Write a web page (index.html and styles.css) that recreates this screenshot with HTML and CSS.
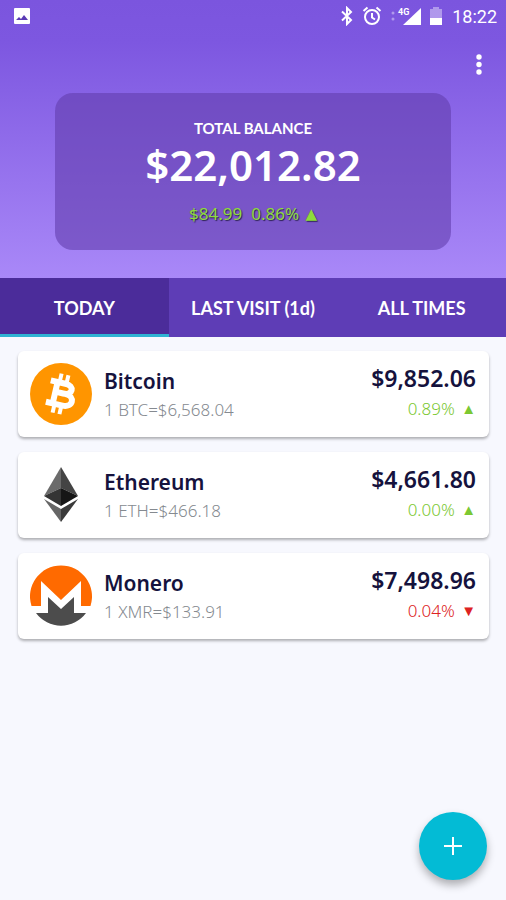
FILE: index.html
```html
<!DOCTYPE html>
<html lang="en">
<head>
  <meta charset="UTF-8">
  <meta name="viewport" content="width=device-width, initial-scale=1">
  <title>Portfolio</title>
  <link rel="stylesheet" href="styles.css">
</head>
<body>
  <header class="header">
    <div class="status-bar">
      <svg class="status-picture" width="18" height="18" viewBox="0 0 18 18">
        <rect x="1" y="1" width="16" height="16" rx="1" fill="#fff"/>
        <path d="M3 13l3-3 2 2 3-4 4 5z" fill="#5a3ab5"/>
      </svg>
      <div class="status-icons">
        <svg width="14" height="20" viewBox="0 0 14 20" fill="none" stroke="#fff" stroke-width="2">
          <path d="M2 5.500l9 8.500-4 4V2l4 4-9 8.500"/>
        </svg>
        <svg class="status-alarm" width="20" height="20" viewBox="0 0 20 20" fill="none" stroke="#fff" stroke-width="2">
          <circle cx="10" cy="11" r="7"/>
          <path d="M10 7v4.500l3 2M1.500 5L5.500 1.500M18.500 5l-4-3.500"/>
        </svg>
        <svg width="32" height="20" viewBox="0 0 32 20" fill="#fff">
          <circle cx="3" cy="7" r="1.500" opacity=".4"/>
          <circle cx="3" cy="13" r="1.500" opacity=".4"/>
          <path d="M31 2v17H13z"/>
          <text class="status-network" x="8" y="9">4G</text>
        </svg>
        <svg class="status-battery" width="12" height="20" viewBox="0 0 12 20" fill="#fff">
          <path d="M0 3h3V1h6v2h3v9H0z" opacity=".4"/>
          <path d="M0 12h12v7H0z"/>
        </svg>
        <span class="status-time">18:22</span>
      </div>
    </div>
    <div class="toolbar">
      <button class="menu-button" aria-label="More options">
        <svg width="6" height="22" viewBox="0 0 6 22" fill="#fff">
          <circle cx="3" cy="3" r="2.700"/>
          <circle cx="3" cy="10.500" r="2.700"/>
          <circle cx="3" cy="18" r="2.700"/>
        </svg>
      </button>
    </div>
    <section class="balance">
      <h1 class="balance-title">TOTAL BALANCE</h1>
      <div class="balance-amount">$22,012.82</div>
      <div class="balance-change">
        <span>$84.99</span>
        <span>0.86% <span class="arrow">▲</span></span>
      </div>
    </section>
  </header>

  <nav class="tabs">
    <button class="tab active">TODAY</button>
    <button class="tab">LAST VISIT (1d)</button>
    <button class="tab">ALL TIMES</button>
  </nav>

  <main class="coin-list">
    <article class="coin">
      <svg class="coin-logo" viewBox="0 0 62 62">
        <circle cx="31" cy="31" r="31" fill="#ff9500"/>
        <g transform="rotate(13 31 31)" fill="none" stroke="#fff">
          <path d="M27 11v8M34 11v8M27 43v8M34 43v8" stroke-width="4"/>
          <path d="M18 20h15c10 0 10 10 0 10H25h10c11 0 11 12 0 12H18M25 20v22" stroke-width="6"/>
        </g>
      </svg>
      <div class="coin-info">
        <h2 class="coin-name">Bitcoin</h2>
        <p class="coin-rate">1 BTC=$6,568.04</p>
      </div>
      <div class="coin-value">
        <div class="coin-amount">$9,852.06</div>
        <div class="coin-change up">0.89% <span class="arrow">▲</span></div>
      </div>
    </article>

    <article class="coin">
      <svg class="coin-logo" viewBox="0 0 62 62">
        <path d="M31 3L14 32l17-8z" fill="#6b6b6b"/>
        <path d="M31 3l17 29-17-8z" fill="#444"/>
        <path d="M14 32l17-8v18z" fill="#343434"/>
        <path d="M48 32l-17-8v18z" fill="#161616"/>
        <path d="M14 35l17 10v13z" fill="#666"/>
        <path d="M48 35L31 45v13z" fill="#3a3a3a"/>
      </svg>
      <div class="coin-info">
        <h2 class="coin-name">Ethereum</h2>
        <p class="coin-rate">1 ETH=$466.18</p>
      </div>
      <div class="coin-value">
        <div class="coin-amount">$4,661.80</div>
        <div class="coin-change up">0.00% <span class="arrow">▲</span></div>
      </div>
    </article>

    <article class="coin">
      <svg class="coin-logo" viewBox="0 0 62 62">
        <path d="M1.500 41A31 31 0 1 1 60.500 41H51V16L31 35 11 16v25z" fill="#ff6a00"/>
        <path d="M6 48h12V32l13 12 13-12v16h12a31 31 0 0 1-50 0z" fill="#4c4c4c"/>
      </svg>
      <div class="coin-info">
        <h2 class="coin-name">Monero</h2>
        <p class="coin-rate">1 XMR=$133.91</p>
      </div>
      <div class="coin-value">
        <div class="coin-amount">$7,498.96</div>
        <div class="coin-change down">0.04% <span class="arrow">▼</span></div>
      </div>
    </article>
  </main>

  <button class="add-button" aria-label="Add coin">
    <svg width="18" height="18" viewBox="0 0 18 18" stroke="#fff" stroke-width="2">
      <path d="M9 0v18M0 9h18"/>
    </svg>
  </button>
</body>
</html>
```
FILE: styles.css
```css
* {
  box-sizing: border-box;
}

body {
  margin: 0;
  min-height: 100vh;
  background-color: #f7f8fe;
  color: #15123d;
  font-family: "Noto Sans", sans-serif;
}

button {
  border: none;
  padding: 0;
  cursor: pointer;
  font-family: inherit;
  color: #fff;
}

svg {
  display: block;
}

h1, h2, p {
  margin: 0;
}

/* Header */
.header {
  padding-bottom: 28px;
  background: linear-gradient(#7b55de 0%, #7d57e0 15%, #a988f8 100%);
  color: #fff;
}

.status-bar {
  display: flex;
  align-items: center;
  justify-content: space-between;
  height: 32px;
  padding: 0 9px 0 13px;
}

.status-icons {
  display: flex;
  align-items: center;
}

.status-alarm {
  margin: 0 8px;
}

.status-network {
  font: bold 9px Roboto, sans-serif;
}

.status-battery {
  margin: 0 10px 0 8px;
}

.status-time {
  font-family: Roboto, sans-serif;
  font-size: 18px;
}

.toolbar {
  display: flex;
  justify-content: flex-end;
  padding: 16px 16px 11px;
}

.menu-button {
  display: flex;
  justify-content: center;
  align-items: center;
  width: 22px;
  height: 34px;
  background: none;
}

.balance {
  margin: 0 55px;
  padding: 25px 16px 24px;
  border-radius: 18px;
  background-color: rgba(98, 62, 174, 0.6);
  text-align: center;
}

.balance-title {
  font-family: Lato, sans-serif;
  font-size: 15px;
  font-weight: 700;
  line-height: 20px;
}

.balance-amount {
  font-size: 42px;
  font-weight: 600;
  line-height: 54px;
}

.balance-change {
  display: flex;
  justify-content: center;
  gap: 9px;
  margin-top: 10px;
  color: #8edb3c;
  font-size: 17px;
  line-height: 24px;
  text-shadow: 1px 1px 1px #2b2150;
}

.arrow {
  margin-left: 2px;
  font-family: "DejaVu Sans", sans-serif;
  font-size: 15px;
  line-height: 1;
  vertical-align: 1px;
}

/* Tabs */
.tabs {
  display: grid;
  grid-template-columns: repeat(3, 1fr);
  background-color: #5e3db6;
}

.tab {
  height: 59px;
  padding-top: 4px;
  border-bottom: 3px solid transparent;
  background: none;
  font-family: Lato, sans-serif;
  font-size: 18px;
  font-weight: 700;
}

.tab.active {
  background-color: #4b2c9a;
  border-bottom-color: #2fb3d3;
}

/* Coins */
.coin-list {
  display: flex;
  flex-direction: column;
  gap: 15px;
  padding: 14px 17px 100px 18px;
}

.coin {
  display: flex;
  align-items: center;
  padding: 12px 13px 12px 12px;
  border-radius: 6px;
  background-color: #fff;
  box-shadow: 0 2px 3px rgba(0, 0, 0, 0.3);
}

.coin-logo {
  width: 62px;
  height: 62px;
}

.coin-info {
  flex: 1;
  margin-left: 12px;
  padding-top: 2px;
}

.coin-name {
  font-size: 21px;
  font-weight: 600;
  line-height: 30px;
}

.coin-rate {
  color: #858a90;
  font-size: 17px;
  font-weight: 300;
  line-height: 28px;
}

.coin-value {
  text-align: right;
}

.coin-amount {
  font-size: 23px;
  font-weight: 600;
  line-height: 30px;
}

.coin-change {
  font-size: 17px;
  font-weight: 300;
  line-height: 32px;
}

.up {
  color: #7cc832;
}

.down {
  color: #dd2222;
}

/* Floating button */
.add-button {
  position: fixed;
  right: 19px;
  bottom: 20px;
  display: flex;
  justify-content: center;
  align-items: center;
  width: 68px;
  height: 68px;
  border-radius: 50%;
  background-color: #03bbd5;
  box-shadow: 0 5px 9px rgba(0, 0, 0, 0.3);
}
```
